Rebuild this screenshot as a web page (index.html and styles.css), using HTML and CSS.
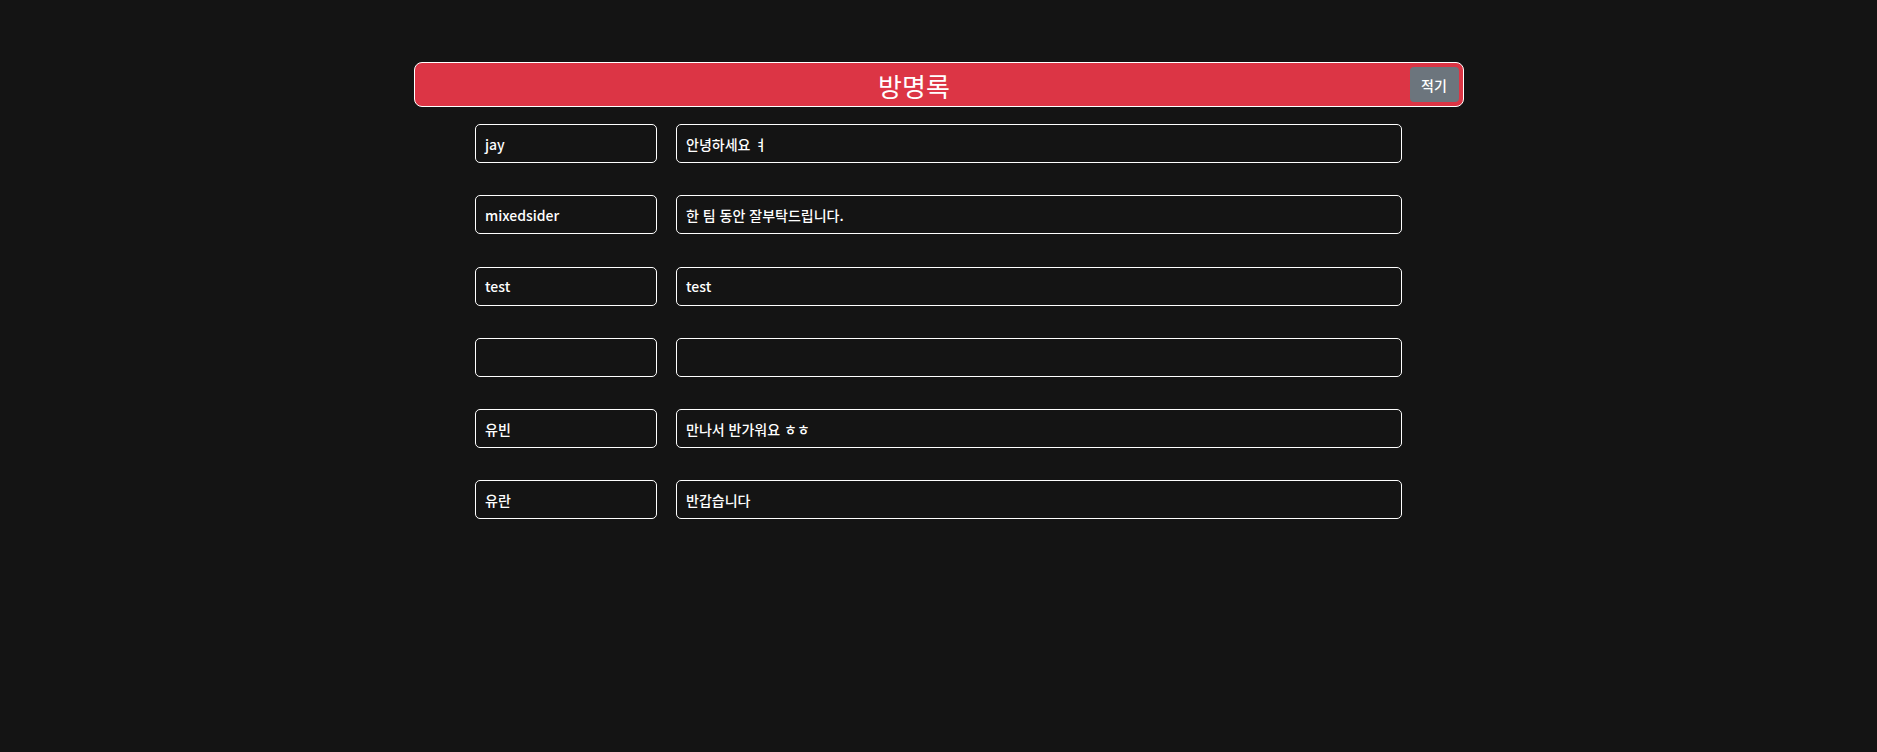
FILE: index.html
```html
<!DOCTYPE html>
<html lang="ko">
<head>
<meta charset="utf-8">
<title>방명록</title>
<link rel="stylesheet" href="styles.css">
</head>
<body>
<main class="page">
  <header class="guestbook-header">
    <h1 class="guestbook-title">방명록</h1>
    <button class="write-btn" type="button">적기</button>
  </header>
  <section class="entries">
    <div class="entry">
      <div class="field name">jay</div>
      <div class="field message">안녕하세요 ㅕ</div>
    </div>
    <div class="entry">
      <div class="field name">mixedsider</div>
      <div class="field message">한 팀 동안 잘부탁드립니다.</div>
    </div>
    <div class="entry">
      <div class="field name">test</div>
      <div class="field message">test</div>
    </div>
    <div class="entry">
      <div class="field name"></div>
      <div class="field message"></div>
    </div>
    <div class="entry">
      <div class="field name">유빈</div>
      <div class="field message">만나서 반가워요 ㅎㅎ</div>
    </div>
    <div class="entry">
      <div class="field name">유란</div>
      <div class="field message">반갑습니다</div>
    </div>
  </section>
</main>
</body>
</html>
```
FILE: styles.css
```css
* {
  box-sizing: border-box;
}

html, body {
  margin: 0;
  padding: 0;
  background: #141414;
  color: #ffffff;
  font-family: "Noto Sans CJK KR", "Noto Sans", sans-serif;
}

.page {
  padding-top: 62px;
  display: flex;
  flex-direction: column;
  align-items: center;
}

.guestbook-header {
  width: 1050px;
  height: 45px;
  background: #dc3545;
  border: 1px solid #ffffff;
  border-radius: 8px;
  display: flex;
  align-items: center;
  padding: 0 4px 0 4px;
}

.guestbook-title {
  flex: 1;
  margin: 0;
  text-align: center;
  font-size: 26px;
  font-weight: 400;
  line-height: 1;
  color: #ffffff;
  padding-top: 3px;
}

.write-btn {
  width: 49px;
  height: 35px;
  padding: 0;
  background: #6c757d;
  color: #ffffff;
  border: none;
  border-radius: 4px;
  font-family: "Noto Sans CJK KR", "Noto Sans", sans-serif;
  font-size: 14px;
  font-weight: 500;
}

.entries {
  margin-top: 17px;
  width: 927px;
  display: flex;
  flex-direction: column;
  gap: 32.25px;
}

.entry {
  display: flex;
  gap: 19px;
}

.field {
  height: 39px;
  border: 1px solid #ffffff;
  border-radius: 5px;
  padding: 0 9px;
  display: flex;
  align-items: center;
  font-size: 14px;
  font-weight: 500;
  color: #ffffff;
  background: #141414;
  white-space: nowrap;
}

.field.name {
  width: 182px;
  flex: none;
}

.field.message {
  flex: 1;
}
```
